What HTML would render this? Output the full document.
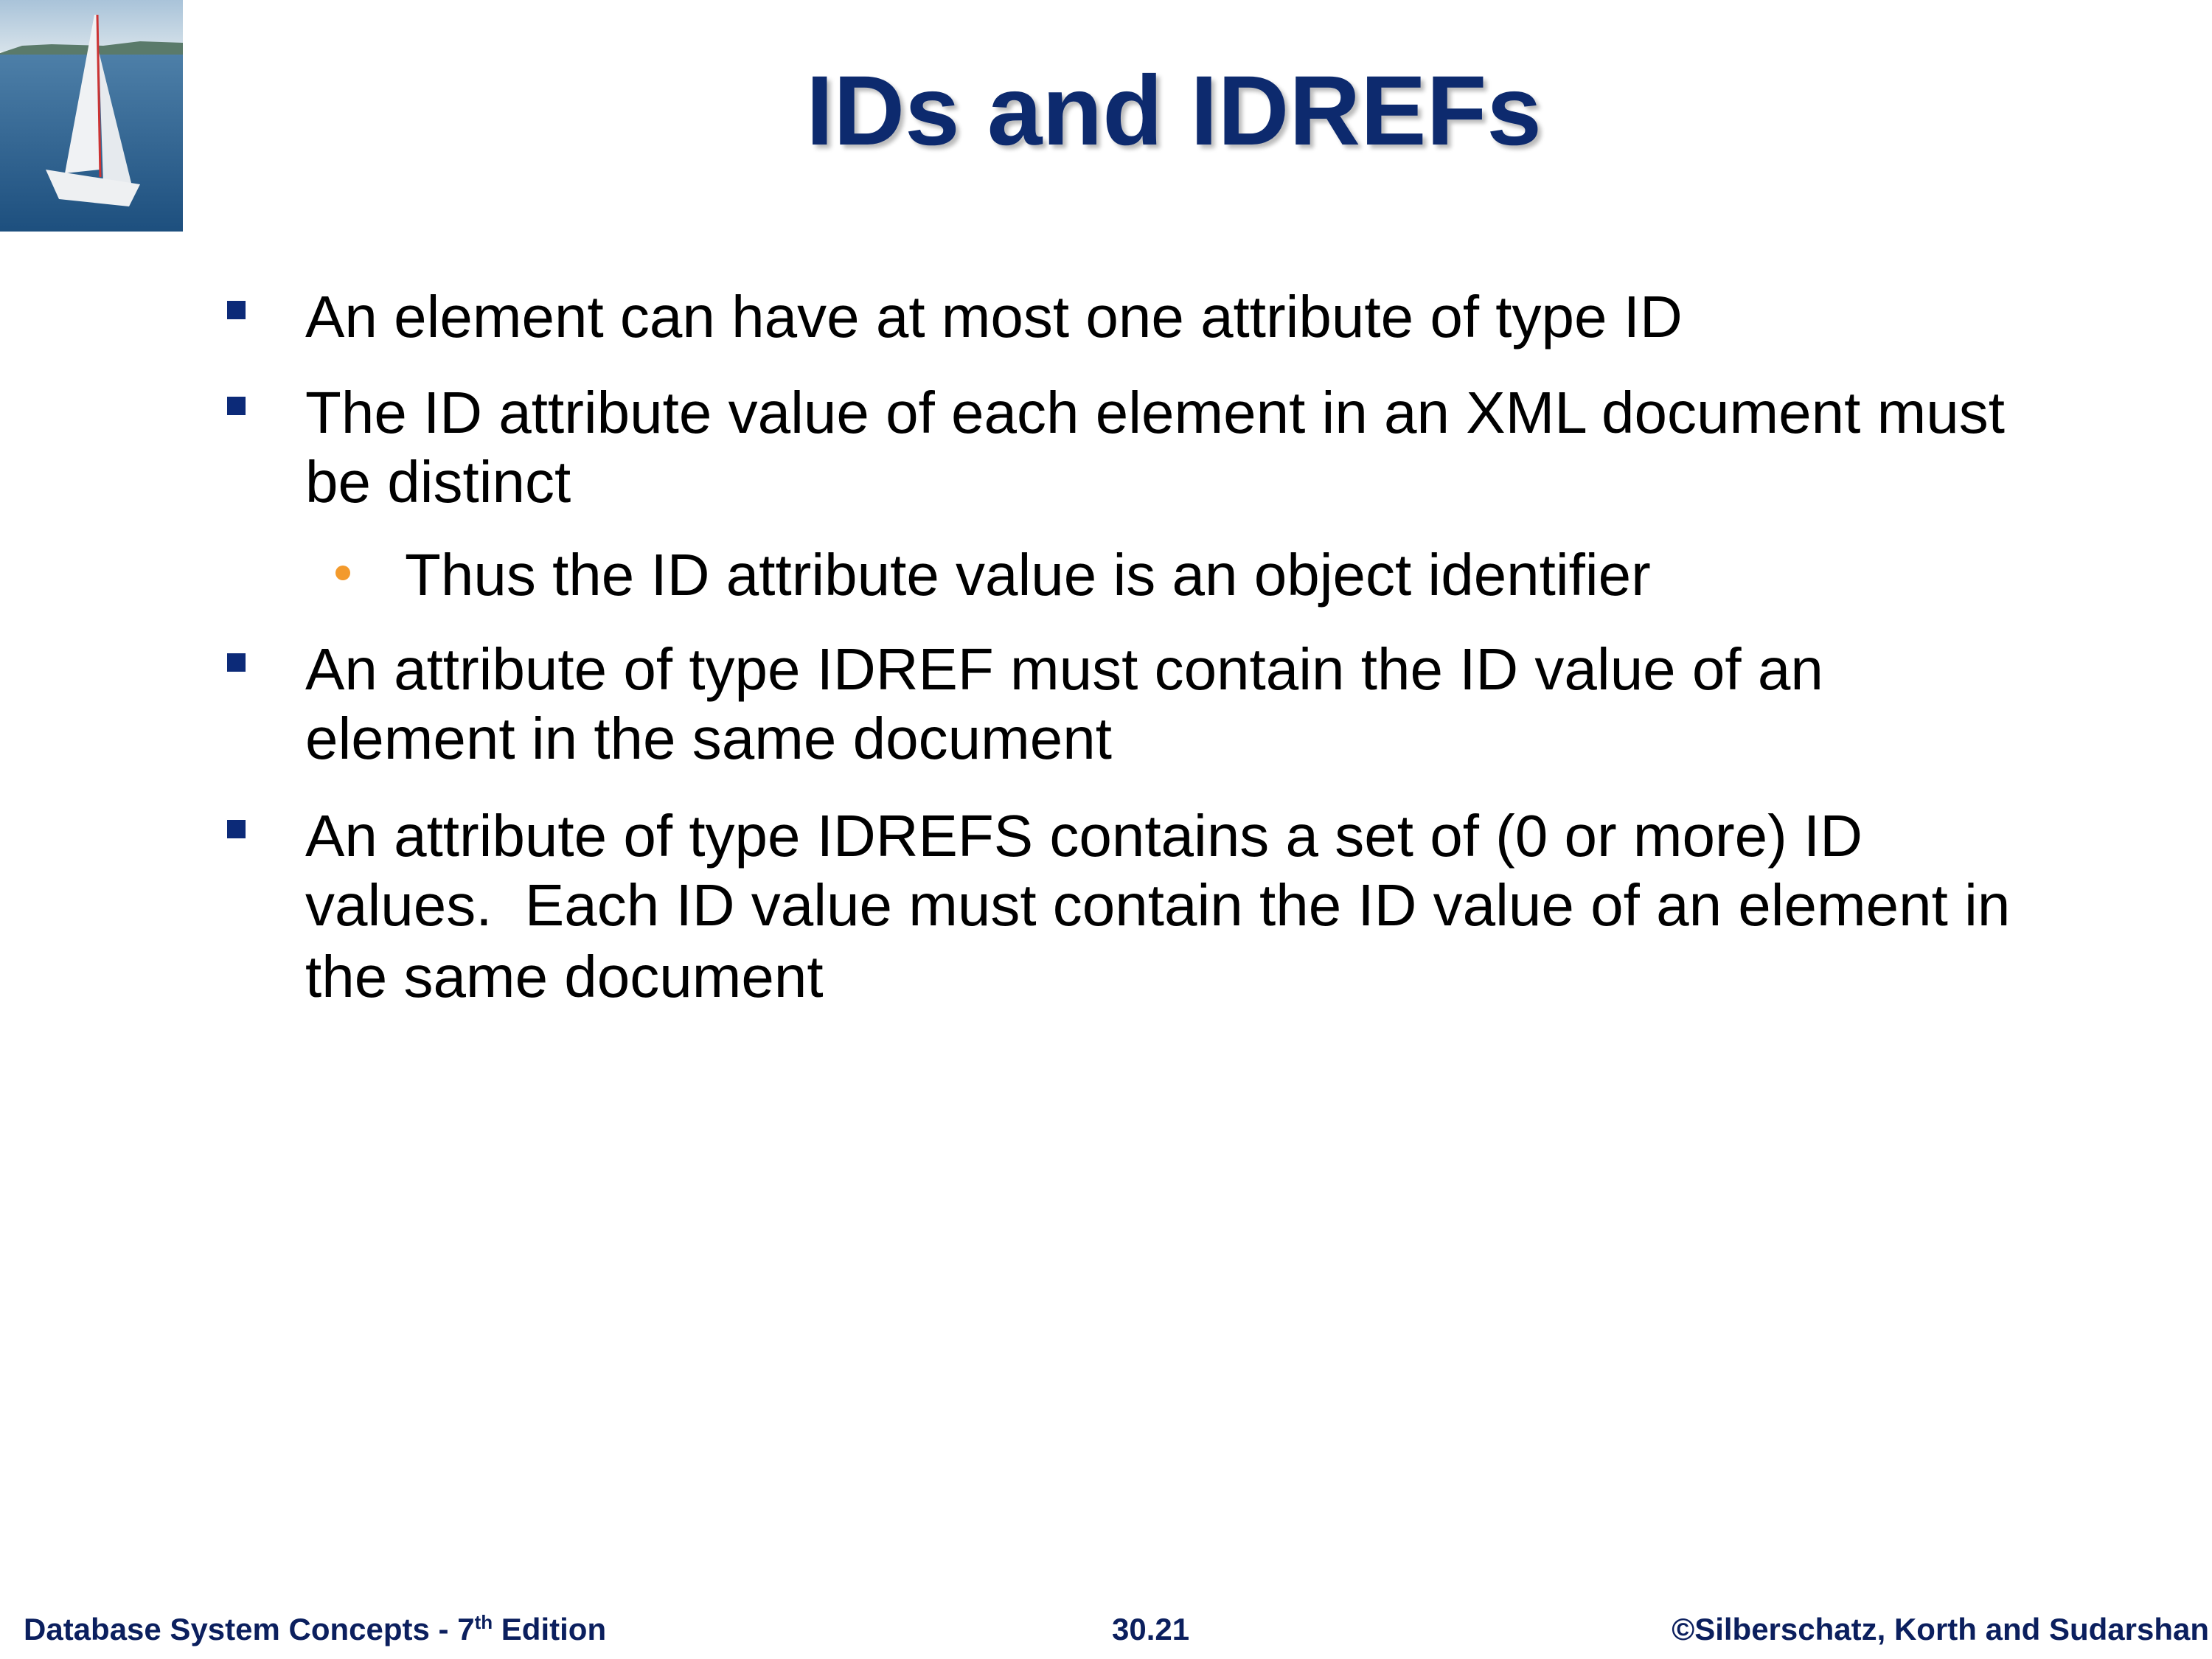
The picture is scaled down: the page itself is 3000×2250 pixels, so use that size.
<!DOCTYPE html>
<html><head><meta charset="utf-8"><style>
body{margin:0;width:3000px;height:2250px;background:#fff;position:relative;overflow:hidden;font-family:"Liberation Sans",Arial,sans-serif}
.t{position:absolute;line-height:1;white-space:nowrap}
.b{font-size:80px;color:#000;left:414px}
.s{font-size:80px;color:#000;left:549px}
.sq{position:absolute;left:308px;width:25px;height:25px;background:#0c2a78}
.f{font-size:42px;font-weight:bold;color:#0b1f5e}
</style></head><body>
<svg style="position:absolute;left:0;top:0" width="248" height="314" viewBox="0 0 248 314">
<defs><linearGradient id="sky" x1="0" y1="0" x2="0" y2="1"><stop offset="0" stop-color="#a9c3d9"/><stop offset="1" stop-color="#d6e2ea"/></linearGradient>
<linearGradient id="sea" x1="0" y1="0" x2="0" y2="1"><stop offset="0" stop-color="#4d7fa8"/><stop offset="1" stop-color="#1d4f7e"/></linearGradient></defs>
<rect width="248" height="70" fill="url(#sky)"/>
<path d="M0 72 L30 62 L70 60 L140 62 L190 56 L248 58 L248 76 L0 76Z" fill="#5a7a6a"/>
<rect y="74" width="248" height="240" fill="url(#sea)"/>
<path d="M128 20 L132 20 L135 230 L88 235 Z" fill="#f0f2f4"/>
<path d="M134 70 L178 248 L140 250Z" fill="#e6eaee"/>
<line x1="132" y1="20" x2="136" y2="240" stroke="#c33" stroke-width="3"/>
<path d="M62 230 L190 250 L175 280 L80 270 Z" fill="#eef0f2"/>
</svg>
<div class="t" style="left:0;width:3184px;text-align:center;top:84px;font-size:134px;font-weight:bold;color:#0d2a6e;text-shadow:5px 5px 6px #bbb">IDs and IDREFs</div>

<div class="sq" style="top:408px"></div>
<div class="t b" style="top:390px">An element can have at most one attribute of type ID</div>
<div class="sq" style="top:538px"></div>
<div class="t b" style="top:520px">The ID attribute value of each element in an XML document must</div>
<div class="t b" style="top:614px">be distinct</div>
<div style="position:absolute;left:455px;top:767px;width:20px;height:20px;border-radius:50%;background:#f39a2c"></div>
<div class="t s" style="top:740px">Thus the ID attribute value is an object identifier</div>
<div class="sq" style="top:886px"></div>
<div class="t b" style="top:868px">An attribute of type IDREF must contain the ID value of an</div>
<div class="t b" style="top:962px">element in the same document</div>
<div class="sq" style="top:1112px"></div>
<div class="t b" style="top:1094px">An attribute of type IDREFS contains a set of (0 or more) ID</div>
<div class="t b" style="top:1188px">values.&nbsp; Each ID value must contain the ID value of an element in</div>
<div class="t b" style="top:1285px">the same document</div>

<div class="t f" style="left:32px;top:2189px">Database System Concepts - 7<sup style="font-size:26px;vertical-align:15px;line-height:0">th</sup> Edition</div>
<div class="t f" style="left:1508px;top:2189px">30.21</div>
<div class="t f" style="right:4px;top:2189px">©Silberschatz, Korth and Sudarshan</div>
</body></html>
